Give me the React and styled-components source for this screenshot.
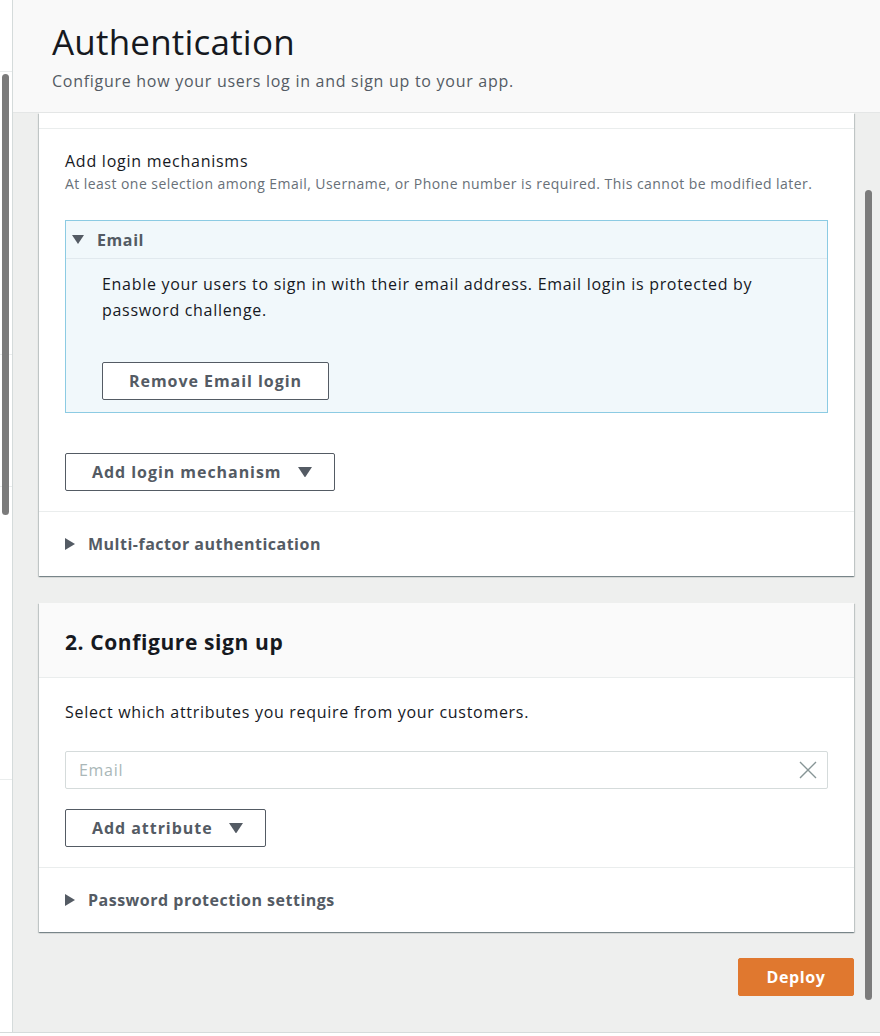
import React from 'react';
import styled, { createGlobalStyle } from 'styled-components';

const GlobalStyle = createGlobalStyle`
  html, body {
    margin: 0;
    padding: 0;
    background: #ffffff;
  }
  body {
    font-family: "Open Sans", "Noto Sans", Arial, sans-serif;
    color: #16191f;
    -webkit-font-smoothing: antialiased;
  }
  * { box-sizing: border-box; }
`;

const Page = styled.div`
  display: flex;
  height: 1033px;
  border-bottom: 1px solid #d5dbdb;
`;

const SideStrip = styled.div`
  position: relative;
  width: 13px;
  flex-shrink: 0;
  background: #ffffff;
  border-right: 1px solid #d5dbdb;
`;

const SideLine = styled.div`
  height: ${p => p.$h}px;
  border-bottom: 1px solid #eaeded;
`;

const Thumb = styled.div`
  position: absolute;
  width: 7px;
  border-radius: 4px;
  background: #7b7b7b;
  left: ${p => p.$left}px;
  right: ${p => p.$right}px;
  top: ${p => p.$top}px;
  height: ${p => p.$height}px;
`;

const Main = styled.div`
  flex: 1;
  display: flex;
  flex-direction: column;
  background: #eeefee;
`;

const Header = styled.header`
  height: 113px;
  flex-shrink: 0;
  background: #f9f9f9;
  border-bottom: 1px solid #e4e6e6;
  padding: 19px 0 0 39px;
`;

const Title = styled.h1`
  margin: 0;
  font-size: 35px;
  font-weight: 400;
  line-height: 46px;
  letter-spacing: 0.2px;
  color: #16191f;
`;

const Subtitle = styled.p`
  margin: 4px 0 0;
  font-size: 16px;
  line-height: 24px;
  letter-spacing: 0.72px;
  color: #545b64;
`;

const Body = styled.div`
  position: relative;
  flex: 1;
  padding: 0 26px 0 26px;
`;

const Card = styled.section`
  background: #ffffff;
  box-shadow: 0 1px 1px 0 rgba(0, 28, 36, 0.3), 1px 1px 1px 0 rgba(0, 28, 36, 0.15), -1px 1px 1px 0 rgba(0, 28, 36, 0.15);
  margin-top: ${p => p.$top || 0}px;
`;

const Stub = styled.div`
  height: 16px;
  border-bottom: 1px solid #eaeded;
`;

const CardHeader = styled.div`
  height: 75px;
  background: #fafafa;
  border-bottom: 1px solid #eaeded;
  padding: 24px 26px 0;
`;

const CardTitle = styled.h2`
  margin: 0;
  font-size: 21px;
  font-weight: 700;
  line-height: 30px;
  letter-spacing: 0.6px;
  color: #16191f;
`;

const Section = styled.div`
  padding: ${p => p.$pad};
  border-bottom: ${p => (p.$divider ? '1px solid #eaeded' : 'none')};
`;

const Label = styled.div`
  font-size: 16px;
  line-height: 22px;
  letter-spacing: 0.75px;
  color: #16191f;
`;

const Hint = styled.div`
  margin-top: 3px;
  font-size: 14px;
  line-height: 18px;
  letter-spacing: 0.45px;
  color: #687078;
`;

const Text = styled.p`
  margin: 0;
  font-size: 16px;
  line-height: 26px;
  letter-spacing: 0.7px;
  color: #16191f;
`;

const Expandable = styled.div`
  margin-top: 27px;
  border: 1px solid #8ccbe3;
  background: #f1f8fb;
`;

const ExpandHead = styled.div`
  display: flex;
  align-items: center;
  gap: 13px;
  height: 38px;
  padding-left: 6px;
  border-bottom: 1px solid #e1e9ee;
  font-size: 16px;
  font-weight: 700;
  letter-spacing: 0.6px;
  color: #545b64;
`;

const ExpandBody = styled.div`
  padding: 12px 36px 12px 36px;
`;

const Button = styled.button`
  display: inline-flex;
  align-items: center;
  gap: 16px;
  height: 38px;
  margin-top: ${p => p.$top || 0}px;
  padding: 0 ${p => p.$padR || 26}px 0 26px;
  border: 1px solid #545b64;
  border-radius: 2px;
  background: #ffffff;
  font-family: inherit;
  font-size: 16px;
  font-weight: 700;
  letter-spacing: 0.95px;
  color: #545b64;
  cursor: pointer;
`;

const Row = styled.div`
  display: flex;
  align-items: center;
  gap: 13px;
  height: 64px;
  padding-left: 26px;
  font-size: 16px;
  font-weight: 700;
  letter-spacing: 0.5px;
  color: #545b64;
`;

const InputWrap = styled.div`
  display: flex;
  align-items: center;
  justify-content: space-between;
  height: 38px;
  margin-top: 26px;
  padding: 0 9px 0 13px;
  border: 1px solid #d5dbdb;
  border-radius: 2px;
  background: #ffffff;
`;

const Placeholder = styled.span`
  font-size: 16px;
  letter-spacing: 0.7px;
  color: #aab7b8;
`;

const Actions = styled.div`
  display: flex;
  justify-content: flex-end;
  margin-top: 26px;
`;

const PrimaryButton = styled.button`
  width: 116px;
  height: 38px;
  border: 1px solid #e0782f;
  border-radius: 2px;
  background: #e0782f;
  font-family: inherit;
  font-size: 16px;
  font-weight: 700;
  letter-spacing: 0.6px;
  color: #ffffff;
  cursor: pointer;
`;

const CaretDown = ({ size = 12, color = '#545b64' }) => (
  <svg width={size} height={size * 0.75} viewBox="0 0 12 9">
    <polygon points="0,0 12,0 6,9" fill={color} />
  </svg>
);

const CaretRight = () => (
  <svg width="10" height="12" viewBox="0 0 10 12">
    <polygon points="0,0 10,6 0,12" fill="#545b64" />
  </svg>
);

const ClearIcon = () => (
  <svg width="20" height="20" viewBox="0 0 20 20">
    <path d="M2 2 L18 18 M18 2 L2 18" stroke="#879596" strokeWidth="1.4" fill="none" />
  </svg>
);

export default function App() {
  return (
    <>
      <GlobalStyle />
      <Page>
        <SideStrip>
          <SideLine $h={72} />
          <SideLine $h={283} />
          <SideLine $h={132} />
          <SideLine $h={293} />
          <Thumb $left={2} $top={74} $height={441} />
        </SideStrip>
        <Main>
          <Header>
            <Title>Authentication</Title>
            <Subtitle>Configure how your users log in and sign up to your app.</Subtitle>
          </Header>
          <Body>
            <Card>
              <Stub />
              <Section $pad="21px 26px 20px" $divider>
                <Label>Add login mechanisms</Label>
                <Hint>At least one selection among Email, Username, or Phone number is required. This cannot be modified later.</Hint>
                <Expandable>
                  <ExpandHead>
                    <CaretDown />
                    Email
                  </ExpandHead>
                  <ExpandBody>
                    <Text>Enable your users to sign in with their email address. Email login is protected by password challenge.</Text>
                    <Button $top={39}>Remove Email login</Button>
                  </ExpandBody>
                </Expandable>
                <Button $top={40} $padR={22}>
                  Add login mechanism
                  <CaretDown size={14} />
                </Button>
              </Section>
              <Row>
                <CaretRight />
                Multi-factor authentication
              </Row>
            </Card>

            <Card $top={27}>
              <CardHeader>
                <CardTitle>2. Configure sign up</CardTitle>
              </CardHeader>
              <Section $pad="21px 26px 20px" $divider>
                <Text>Select which attributes you require from your customers.</Text>
                <InputWrap>
                  <Placeholder>Email</Placeholder>
                  <ClearIcon />
                </InputWrap>
                <Button $top={20} $padR={22}>
                  Add attribute
                  <CaretDown size={14} />
                </Button>
              </Section>
              <Row>
                <CaretRight />
                Password protection settings
              </Row>
            </Card>

            <Actions>
              <PrimaryButton>Deploy</PrimaryButton>
            </Actions>
            <Thumb $right={8} $top={77} $height={810} />
          </Body>
        </Main>
      </Page>
    </>
  );
}
